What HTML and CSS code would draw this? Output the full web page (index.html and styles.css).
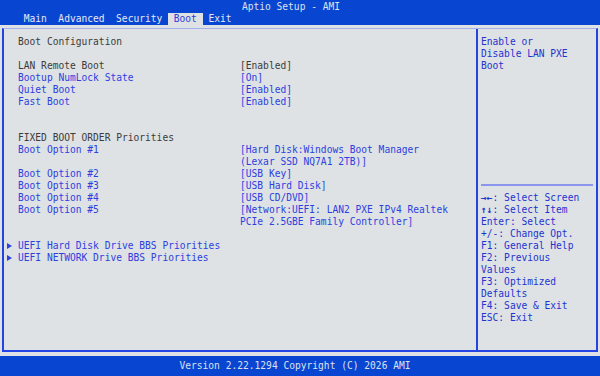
FILE: index.html
```html
<!DOCTYPE html>
<html>
<head>
<meta charset="utf-8">
<link rel="stylesheet" href="styles.css">
</head>
<body>
<div class="screen">
  <header class="topbar">
    <div class="title">Aptio Setup - AMI</div>
    <nav class="tabs">
      <span class="tab">Main</span><span class="tab">Advanced</span><span class="tab">Security</span><span class="tab active">Boot</span><span class="tab">Exit</span>
    </nav>
  </header>
  <main class="frame">
    <section class="settings">
      <div class="row"><span class="label static">Boot Configuration</span></div>
      <div class="row blank"></div>
      <div class="row"><span class="label static">LAN Remote Boot</span><span class="value static">[Enabled]</span></div>
      <div class="row"><span class="label">Bootup NumLock State</span><span class="value">[On]</span></div>
      <div class="row"><span class="label">Quiet Boot</span><span class="value">[Enabled]</span></div>
      <div class="row"><span class="label">Fast Boot</span><span class="value">[Enabled]</span></div>
      <div class="row blank"></div>
      <div class="row blank"></div>
      <div class="row"><span class="label static">FIXED BOOT ORDER Priorities</span></div>
      <div class="row"><span class="label">Boot Option #1</span><span class="value">[Hard Disk:Windows Boot Manager<br>(Lexar SSD NQ7A1 2TB)]</span></div>
      <div class="row"><span class="label">Boot Option #2</span><span class="value">[USB Key]</span></div>
      <div class="row"><span class="label">Boot Option #3</span><span class="value">[USB Hard Disk]</span></div>
      <div class="row"><span class="label">Boot Option #4</span><span class="value">[USB CD/DVD]</span></div>
      <div class="row"><span class="label">Boot Option #5</span><span class="value">[Network:UEFI: LAN2 PXE IPv4 Realtek<br>PCIe 2.5GBE Family Controller]</span></div>
      <div class="row blank"></div>
      <div class="row submenu"><span class="arrow"></span><span class="label">UEFI Hard Disk Drive BBS Priorities</span></div>
      <div class="row submenu"><span class="arrow"></span><span class="label">UEFI NETWORK Drive BBS Priorities</span></div>
    </section>
    <aside class="help">
      <div class="help-top">Enable or<br>Disable LAN PXE<br>Boot</div>
      <div class="help-keys">
        <div class="key"><b class="keysym">→←</b>: Select Screen</div>
        <div class="key"><b class="keysym">↑↓</b>: Select Item</div>
        <div class="key">Enter: Select</div>
        <div class="key">+/-: Change Opt.</div>
        <div class="key">F1: General Help</div>
        <div class="key">F2: Previous<br>Values</div>
        <div class="key">F3: Optimized<br>Defaults</div>
        <div class="key">F4: Save &amp; Exit</div>
        <div class="key">ESC: Exit</div>
      </div>
    </aside>
  </main>
  <footer class="footer">Version 2.22.1294 Copyright (C) 2026 AMI</footer>
</div>
</body>
</html>
```
FILE: styles.css
```css
html, body {
  margin: 0;
  padding: 0;
}
body {
  background: #dee2e4;
  font-family: "DejaVu Sans Mono", "Liberation Mono", monospace;
  font-size: 9.6px;
}
.screen {
  width: 600px;
  height: 376px;
  display: flex;
  flex-direction: column;
  background: #dee2e4;
  overflow: hidden;
}
.topbar {
  height: 25px;
  background: #0846d2;
  color: #dde1ec;
  display: flex;
  flex-direction: column;
}
.title {
  padding-top: 1px;
  line-height: 12px;
  height: 12px;
  text-align: center;
  padding-right: 18px;
}
.tabs {
  display: flex;
  padding-left: 18px;
  line-height: 12px;
  height: 12px;
  white-space: nowrap;
}
.tab {
  padding: 0 5.76px;
  color: #e6e9f2;
}
.tab.active {
  background: #dee2e4;
  color: #2c40d8;
}
.frame {
  flex: 1;
  margin: 3px 2px 4px 2px;
  border: 2px solid #2443e4;
  border-top: 1px solid #a3b0ee;
  display: grid;
  grid-template-columns: 472px 1fr;
  min-height: 0;
}
.settings {
  padding: 7px 0 0 14px;
}
.row {
  display: flex;
  line-height: 12px;
  min-height: 12px;
  white-space: nowrap;
}
.label {
  width: 222px;
  color: #2d40e0;
}
.value {
  color: #2d40e0;
}
.static {
  color: #3b3b3b;
}
.submenu {
  margin-left: -12px;
}
.submenu .label {
  width: auto;
}
.arrow {
  width: 12px;
  display: flex;
  align-items: center;
}
.arrow::before {
  content: "";
  display: block;
  margin-left: 1px;
  width: 0;
  height: 0;
  border-top: 3px solid transparent;
  border-bottom: 3px solid transparent;
  border-left: 5px solid #2d40e0;
}
.help {
  border-left: 2px solid #2443e4;
  padding: 0 3px;
  color: #2432d0;
  line-height: 12px;
  white-space: nowrap;
  display: flex;
  flex-direction: column;
}
.help-top {
  height: 148px;
  padding-top: 7px;
}
.help-keys {
  border-top: 2px solid #8b95ee;
  padding-top: 6px;
}
.key {
  line-height: 12px;
}
.keysym {
  font-weight: bold;
}
.footer {
  height: 20px;
  line-height: 20px;
  background: #0846d2;
  color: #dde1ec;
  text-align: center;
  padding-right: 10px;
}
```
